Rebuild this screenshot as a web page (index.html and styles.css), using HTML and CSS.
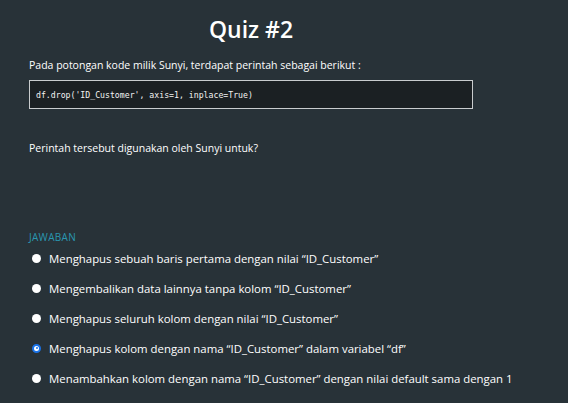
FILE: index.html
```html
<!DOCTYPE html>
<html lang="id">
<head>
<meta charset="utf-8">
<link rel="stylesheet" href="styles.css">
</head>
<body>
<main class="quiz">
  <h1 class="title">Quiz #2</h1>
  <p class="intro">Pada potongan kode milik Sunyi, terdapat perintah sebagai berikut :</p>
  <pre class="code">df.drop('ID_Customer', axis=1, inplace=True)</pre>
  <p class="question">Perintah tersebut digunakan oleh Sunyi untuk?</p>
  <div class="answers">
    <div class="label">JAWABAN</div>
    <label class="option"><span class="radio"></span><span>Menghapus sebuah baris pertama dengan nilai “ID_Customer”</span></label>
    <label class="option"><span class="radio"></span><span>Mengembalikan data lainnya tanpa kolom “ID_Customer”</span></label>
    <label class="option"><span class="radio"></span><span>Menghapus seluruh kolom dengan nilai “ID_Customer”</span></label>
    <label class="option"><span class="radio checked"></span><span>Menghapus kolom dengan nama “ID_Customer” dalam variabel “df”</span></label>
    <label class="option"><span class="radio"></span><span>Menambahkan kolom dengan nama “ID_Customer” dengan nilai default sama dengan 1</span></label>
  </div>
</main>
</body>
</html>
```
FILE: styles.css
```css
html, body {
  margin: 0;
  padding: 0;
  background: #283238;
}
body {
  font-family: "Open Sans", "Noto Sans", sans-serif;
  color: #ffffff;
}
.quiz {
  width: 444px;
  padding: 13px 0 0 29px;
  display: flex;
  flex-direction: column;
}
.title {
  margin: 0;
  text-align: center;
  font-size: 23px;
  font-weight: 600;
  line-height: 32px;
}
.intro {
  margin: 12px 0 0;
  font-size: 10.5px;
  line-height: 16px;
}
.code {
  margin: 7px 0 0;
  height: 29px;
  box-sizing: border-box;
  border: 1px solid #c9ccce;
  background: #1b2023;
  padding: 0 6px;
  display: flex;
  align-items: center;
  font-family: "DejaVu Sans Mono", monospace;
  font-size: 8.2px;
  color: #f2f2f2;
}
.question {
  margin: 31px 0 0;
  font-size: 10.5px;
  line-height: 16px;
}
.answers {
  margin-top: 74px;
  display: flex;
  flex-direction: column;
}
.label {
  color: #2a97b1;
  font-size: 10px;
  line-height: 14px;
  letter-spacing: 0.3px;
}
.option {
  display: flex;
  align-items: center;
  gap: 8px;
  height: 30px;
  margin-top: -8px;
  margin-bottom: 8px;
  font-size: 11.4px;
  white-space: nowrap;
  padding-left: 3px;
}
.option:first-of-type { margin-top: -1px; }
.radio {
  width: 9px;
  height: 9px;
  border-radius: 50%;
  background: #ffffff;
  box-sizing: border-box;
  flex: none;
}
.radio.checked {
  border: 2px solid #1a73e8;
  background: #ffffff;
  position: relative;
}
.radio.checked::after {
  content: "";
  position: absolute;
  left: 1.5px;
  top: 1.5px;
  width: 2px;
  height: 2px;
  border-radius: 50%;
  background: #1a73e8;
}
```
